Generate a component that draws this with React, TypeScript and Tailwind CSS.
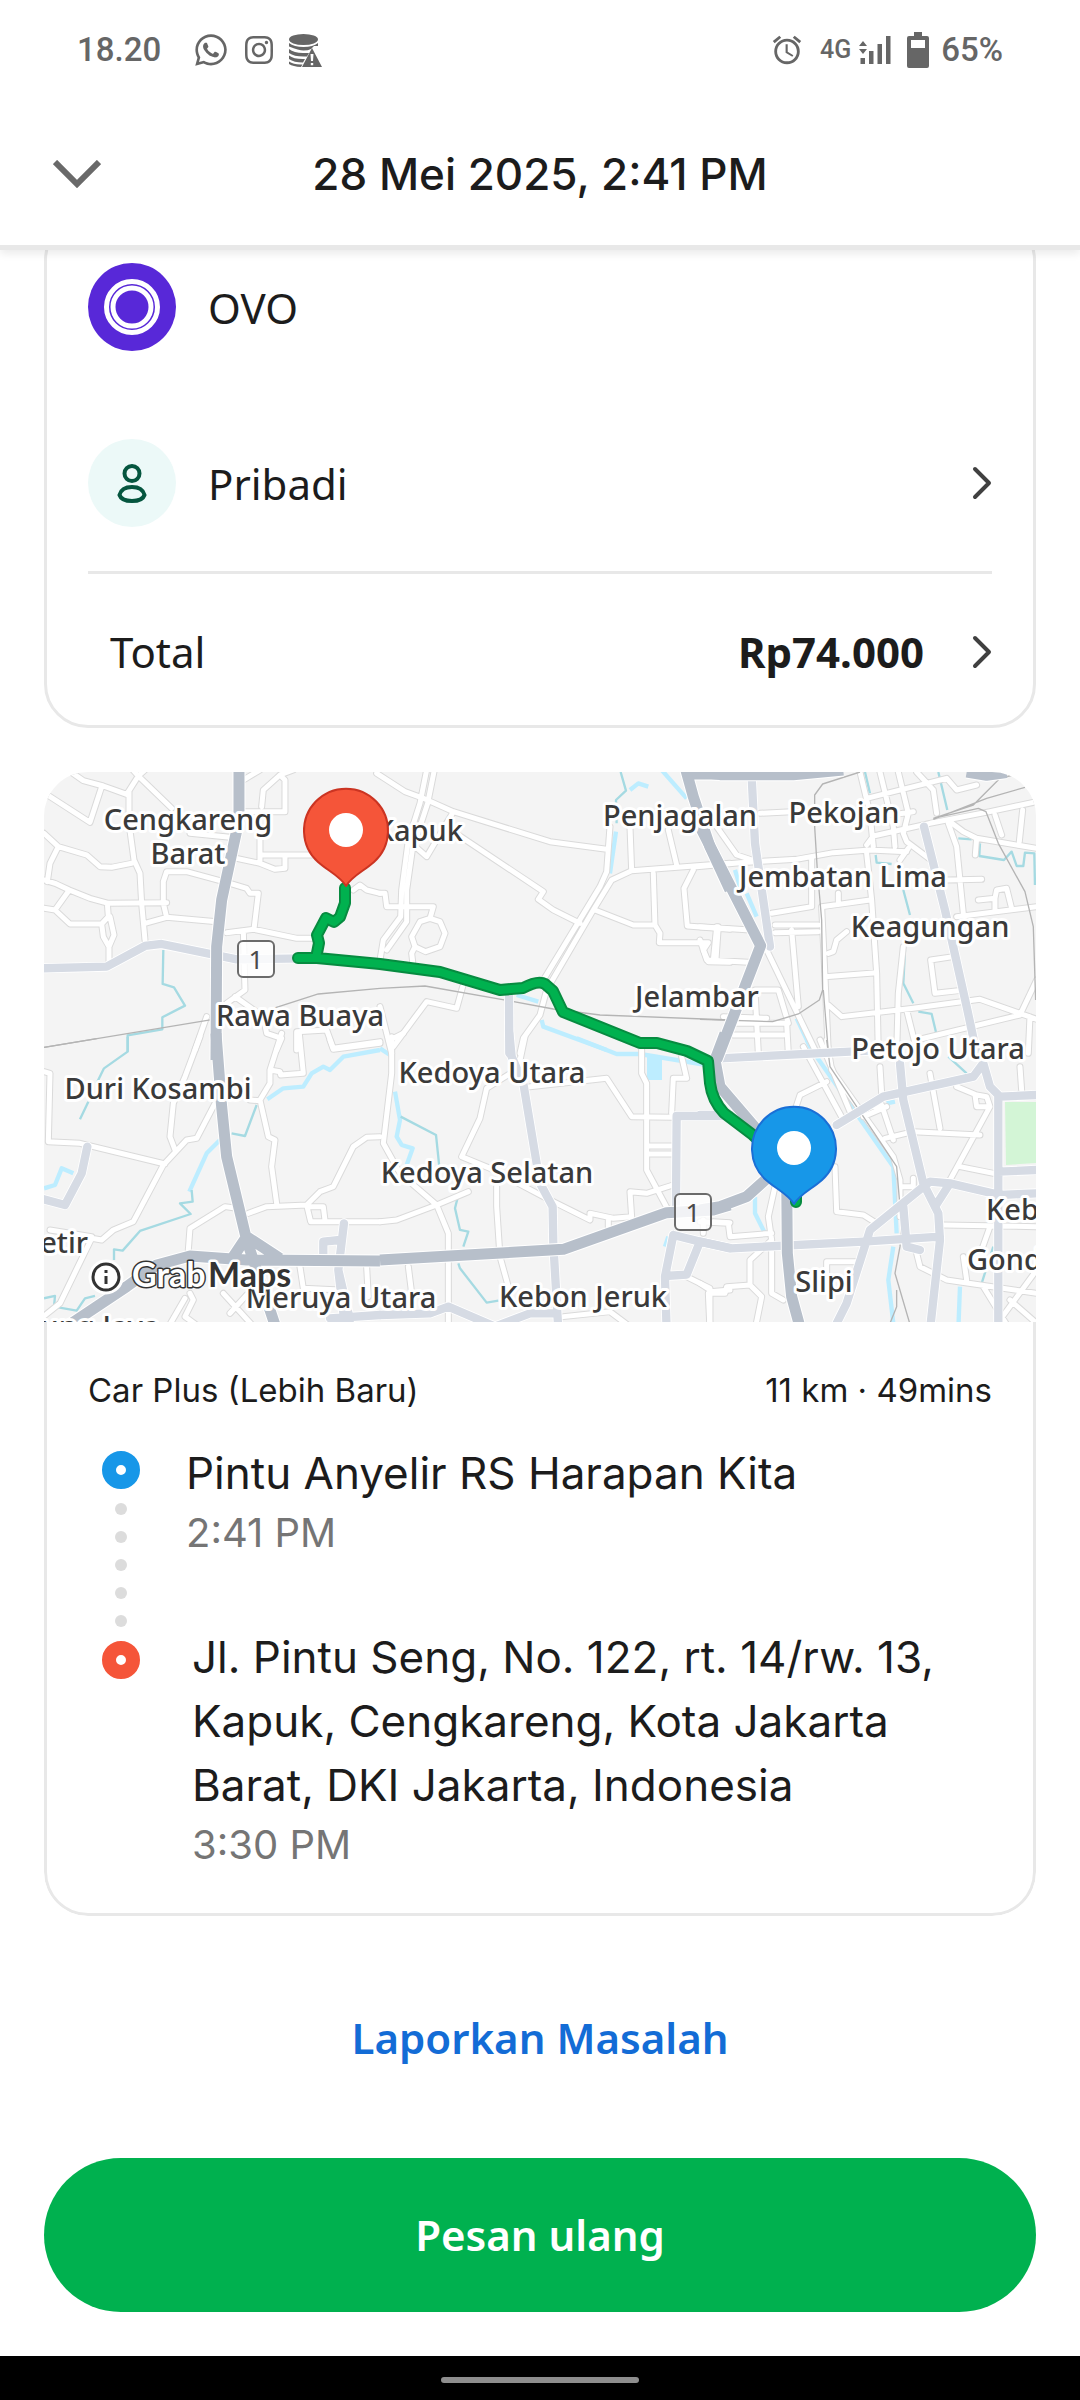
import React from 'react';
import { FaInstagram, FaWhatsapp } from 'react-icons/fa';
import { MdAlarm } from 'react-icons/md';

interface MapSheet {
  origin: string;
  minor: string;
  light: string;
  heavy: string;
  stream: string;
  river: string;
  rail: string;
}

// The map is cut in six sheets, each drawn at three times its final size
const SHEETS: MapSheet[] = [
  {
    origin: 'translate(30 760) scale(0.3333)',
    minor:
      'M100 20L160 62 220 78 290 103 325 48 425 145M325 48L300 20M325 48L345 30M215 80L180 187 45 100M297 95L297 190 312 300 330 340 335 430 345 540M42 220L85 260 170 285 210 320 245 322 305 310M85 260L60 310 52 365M42 360L75 370 118 390 180 415 235 430 410 428M118 390L75 450 42 445M75 450L120 492 215 492 235 470 232 430M215 492L220 530 237 560 237 610M240 470L252 525 237 560M345 490L410 472 560 485M410 472L400 430 400 365 410 335 470 335 600 370 650 385 660 400 685 400 672 508 590 518M672 508L800 535 850 535M640 512L645 690 590 730M530 770L495 870M615 710L700 770 710 820 755 835 740 870M620 155L765 155 765 60 750 45 700 90 695 140M750 45L790 30M640 60L690 30M690 240L690 310 620 295M690 285L850 285M690 310L735 328 765 325 765 290M480 220L600 232M970 390L990 375 1010 390 1050 400M800 870L800 815 890 810 910 865 1050 845',
    light: 'M30 625L230 620 345 558 395 552 620 598 820 595',
    heavy: 'M627 20L627 180 575 420 560 560 558 900',
    stream: 'M400 570L398 672 432 682 465 737 397 772 397 808 293 826 293 875',
    river: '',
    rail: 'M42 862L550 778M730 745L865 702 1050 685',
  },
  {
    origin: 'translate(380 760) scale(0.3333)',
    minor:
      'M-10 40L75 95 130 115 220 155 510 245 680 268M140 30L120 130 85 240 65 390 62 470 10 540 0 600M163 30L143 130 97 270 80 390 80 485 20 570M220 155L140 290 100 255M235 225L490 395 475 418 520 450 600 490M0 400L15 400 20 440 160 440 150 475 180 485 195 520 180 560 137 575 105 560 95 530 120 485 150 475M105 560L95 580 98 605M690 200L680 335 660 380 490 660M1050 310L755 332 695 360 640 450 500 690 480 765 430 835 420 880M750 200L755 330M865 210L890 315M820 340L825 495 760 495 645 450M825 495L840 520 838 548 985 548 970 570 985 605 1050 607M940 330L912 385 922 498 1050 508M1015 500L1008 600M248 680L230 745 140 725 40 860M0 740L35 880',
    light: 'M387 700L388 880',
    heavy: 'M915 20L940 110 990 260 1050 390M930 42L1050 42',
    stream: 'M722 36L738 92 708 120 710 190',
    river: 'M845 30L920 115M708 215L690 340M750 90L775 70 805 80M410 705L475 725M485 780L490 800 680 870',
    rail: 'M0 685L135 678 385 722 520 747 660 765 1050 780',
  },
  {
    origin: 'translate(700 760) scale(0.3333)',
    minor:
      'M180 160L275 155M-10 320L120 308 290 298 400 278 510 270 620 275M500 255L520 228 690 190 870 155 1010 125M480 36L510 160 520 260M540 36L580 200 585 260M595 36L625 160 610 220M500 115L620 85 740 55 770 90 830 75M650 36L700 90 710 160M510 175L640 155M750 185L790 215 830 235 1010 265M745 190L770 260 790 460M885 165L905 225M968 150L958 245M830 235L826 285M50 200L110 285 155 300M500 280L515 420 530 640 535 880M215 460L335 440 335 290M365 440L510 420M415 400L415 430M365 440L375 650 385 880M375 650L530 638M440 515L410 540 400 575 385 580M225 518L355 515M225 495L355 495M275 510L295 740M0 500L150 510M50 500L40 600M0 540L20 600 145 607M610 220L620 245 700 305M625 265L600 300M740 360L845 358M770 470L1010 440M835 420L885 415 890 390 920 385 935 445M885 415L885 450M760 590L692 600 705 700 775 692M385 735L425 770 640 745 840 718 1010 778M610 560L595 700 590 880M620 750L650 870M650 840L960 765 1010 660M200 570L350 880M165 690L235 690 265 790M165 690L175 880M110 790L260 790 265 880M100 825L250 825M70 770L200 775M990 770L985 880',
    light: 'M155 50L165 250 210 560M672 200L735 450 800 740 830 880',
    heavy: 'M-5 190L182 557 50 900M-20 34L60 44 280 44 430 30M800 36L860 46 920 38',
    stream:
      'M495 36L510 100M715 36L742 150M775 235L815 238M840 250L838 288 912 300 935 275 950 318 970 318 975 278 1003 280 1005 375M527 285L530 308 575 312M600 300L630 270M610 390L630 465M615 570L610 670 640 730M655 755L695 762 710 825M375 660L378 720',
    river: 'M140 400L170 470M105 330L120 380M290 775L335 870',
    rail: 'M480 36L368 72 344 105 344 200 352 330 365 480 368 690 358 720 295 762 218 785 0 778M370 690L385 875M700 175L820 135 900 55 940 45M700 178L860 115 975 82M700 175L835 145 858 155 895 250 975 395 1000 500 1007 720',
  },
  {
    origin: 'translate(30 1040) scale(0.3333)',
    minor:
      'M510 -10L465 110 430 190 420 290 435 330M42 95L60 100 55 305 150 310 405 372M555 190L500 295 470 300 400 375 310 545 250 570 215 600 185 595 90 790 40 830M755 -20L720 90 720 130 690 180 715 290 735 300 725 380 740 490M660 180L690 182M720 90L750 95 752 105 820 100 808 -20M900 0L910 28 1050 10M1050 290L1010 292 970 320 910 440 870 455 830 495 710 500 655 520M830 495L842 545 1050 545M840 500L880 500 885 540M475 630L480 565 585 500 620 505M60 570L185 590M480 760L490 780 465 830 520 870M465 775L410 870M580 760L680 870M650 765L600 820M810 680L820 745 930 750M1010 680L1015 770',
    light: 'M172 320L155 400 105 495 30 475M942 550L925 690 960 840M925 690L945 860M880 650L880 605 930 600M900 835L1050 825',
    heavy: 'M558 -20L575 200 590 350 650 600 740 870M110 860L290 740 380 675 480 648 650 660 1050 663M610 650L650 590 750 655',
    stream:
      'M293 -10L293 35 222 85 200 130M175 185L150 238M680 195L645 288 605 280M485 450L488 485 450 490 482 522 330 573 278 632 252 628 252 660M42 775L75 768 72 800 140 812 165 775 195 768',
    river: 'M570 300L530 340 478 455M712 178L760 145 820 140 845 100 880 80 900 90 940 50 1050 30M42 445L75 435 95 385 130 400',
    rail: 'M42 22L200 -4',
  },
  {
    origin: 'translate(380 1040) scale(0.3333)',
    minor:
      'M35 -10L35 100 10 310 60 400 170 495 205 580 205 870M0 545L50 540 170 495 265 455M435 -10L415 85 320 145 300 235 245 350 330 385 490 470 630 540 630 520 700 535 755 530 750 455 800 460 880 435M350 440L350 500 360 650 385 740M450 140L680 115 755 230 880 232M785 30L785 100 800 130 800 390 870 520M905 50L920 115 880 115 875 220M805 318L880 318M805 342L880 342M85 680L95 760M685 540L685 560M550 830L690 815 750 860M920 710L990 745 990 870M990 755L1050 750M1000 545L1050 548M970 540L970 580M30 0L70 -20',
    light:
      'M388 -20L395 50 430 130 480 430 518 500 520 610 535 870M1050 228L890 228 888 510M880 585L855 710 860 870M855 708L920 704 960 605M880 585L960 605 1050 625M0 825L150 820 205 800 345 860 450 820 530 820',
    heavy: 'M0 660L550 628 860 518 1000 510 1050 495',
    stream: 'M62 230L168 285 180 400M235 465L225 505 240 570 265 575 250 620M235 670L240 685 320 788 355 782',
    river: 'M45 155L60 240 50 290 65 315 98 325 80 375M590 -5L710 42 780 42 980 75M0 25L30 45M865 590L855 620M822 50V118',
    rail: '',
  },
  {
    origin: 'translate(700 1040) scale(0.3333)',
    minor:
      'M380 125L300 165 285 210M310 20L430 240M360 0L450 215M380 0L395 90 580 350 600 420 600 530M490 230L560 200M515 200L545 195 580 300M555 295L640 275 840 285M690 100L720 265M870 200L750 420M540 80L545 160M770 140L830 165 860 170 870 200 830 200 825 165M960 80L965 150M780 380L880 400M640 415L640 440 600 440M405 380L410 515 490 525 530 550M225 440L205 530 215 600 150 660 150 735 185 770 165 870M215 600L215 760 250 780M150 735L80 740 75 760 25 760 30 870M0 730L30 750M0 545L85 550 90 590 215 580M380 700L380 665 470 665M730 555L1010 560M870 560L845 630M790 650L800 720M650 640L660 680 740 720 1010 760M850 740L930 870M900 840L1010 690M930 780L1010 850',
    light:
      'M60 55L450 35 540 30M0 225L130 225M410 255L550 170 820 110 850 70 870 140 900 170 1010 165M600 70L610 180 670 430 715 520 720 600 690 870M895 170L895 870M895 395L1010 390M410 850L440 790 510 570 670 440 690 425 750 430 900 465 1010 460M750 430L705 500M0 605L95 625 490 605 720 590M610 500L620 620 660 630',
    heavy: 'M75 -20L45 60 60 140 180 280M0 510L60 500 140 470 240 380M260 400L262 640 275 770 305 880',
    stream: 'M745 50L800 100M880 620L845 730',
    river: 'M320 0L350 50 580 380 590 580M580 620L565 720 580 850M165 470L165 520 195 580M560 190L585 185M780 740L775 870',
    rail: 'M380 0L390 80 590 380 605 560 600 620 585 700 635 870M590 750L590 800 570 850',
  },
];

const LABELS: { text: string; x: number; y: number; anchor?: 'start' | 'end' }[] = [
  { text: 'Cengkareng', x: 188, y: 830 },
  { text: 'Barat', x: 188, y: 864 },
  { text: 'Kapuk', x: 463, y: 841, anchor: 'end' },
  { text: 'Penjagalan', x: 680, y: 826 },
  { text: 'Pekojan', x: 844, y: 823 },
  { text: 'Jembatan Lima', x: 843, y: 887 },
  { text: 'Keagungan', x: 930, y: 937 },
  { text: 'Rawa Buaya', x: 300, y: 1026 },
  { text: 'Jelambar', x: 697, y: 1007 },
  { text: 'Petojo Utara', x: 938, y: 1059 },
  { text: 'Duri Kosambi', x: 158, y: 1099 },
  { text: 'Kedoya Utara', x: 492, y: 1083 },
  { text: 'Kedoya Selatan', x: 487, y: 1183 },
  { text: 'Kebon Jeruk', x: 583, y: 1307 },
  { text: 'Meruya Utara', x: 341, y: 1308 },
  { text: 'Slipi', x: 824, y: 1292 },
  { text: 'Keb', x: 986, y: 1220, anchor: 'start' },
  { text: 'Gond', x: 967, y: 1270, anchor: 'start' },
  { text: 'etir', x: 88, y: 1253, anchor: 'end' },
  { text: 'ung Jaya', x: 100, y: 1337 },
];

const ROUTE =
  'M345 888L345 903 340 917 334 922 326 918 317 935 319 943 316 958M298 958L317 958 380 964 440 972 500 990 523 988Q538 980 545 984L553 991 563 1012 640 1043 657 1043 687 1051 708 1061 710 1083Q712 1100 724 1113L753 1135 796 1175 796 1202';

const PIN = 'M0 56C-6 46-18 41-28 32A42 42 0 1 1 28 32C18 41 6 46 0 56Z';

const Shield = ({ x, y }: { x: number; y: number }) => (
  <g>
    <rect x={x} y={y} width="36" height="36" rx="5" fill="#fff" fillOpacity="0.8" stroke="#6b6b6b" strokeWidth="2" />
    <text x={x + 18} y={y + 28} textAnchor="middle" fontSize="26" fill="#4a4a4a">1</text>
  </g>
);

const RouteMap = () => (
  <svg
    viewBox="44 772 992 550"
    className="block w-full bg-[#f4f4f4] font-['Noto_Sans',sans-serif]"
    fill="none"
    strokeLinejoin="round"
    role="img"
    aria-label="Peta rute perjalanan"
  >
    <path d="M1005 1102H1036V1163L1006 1165Z" fill="#d3f5d6" />
    {SHEETS.map((s) => (
      <g key={s.origin} transform={s.origin}>
        <path d={s.river} stroke="#bdedff" strokeWidth="13" />
        <path d={s.stream} stroke="#a5dae2" strokeWidth="7" />
      </g>
    ))}
    <rect x="647" y="1056" width="15" height="24" fill="#bdedff" />
    {SHEETS.map((s) => (
      <path key={s.origin} transform={s.origin} d={s.minor} stroke="#dadada" strokeWidth="21" strokeLinecap="round" />
    ))}
    {SHEETS.map((s) => (
      <path key={s.origin} transform={s.origin} d={s.minor} stroke="#fff" strokeWidth="15" strokeLinecap="round" />
    ))}
    {SHEETS.map((s) => (
      <path key={s.origin} transform={s.origin} d={s.rail} stroke="#b4b4b4" strokeWidth="4" />
    ))}
    {SHEETS.map((s) => (
      <path key={s.origin} transform={s.origin} d={s.light} stroke="#fff" strokeWidth="30" strokeLinecap="round" />
    ))}
    {SHEETS.map((s) => (
      <path key={s.origin} transform={s.origin} d={s.light} stroke="#d6dbe4" strokeWidth="25" strokeLinecap="round" />
    ))}
    {SHEETS.map((s) => (
      <path key={s.origin} transform={s.origin} d={s.heavy} stroke="#fff" strokeWidth="39" />
    ))}
    {SHEETS.map((s) => (
      <path key={s.origin} transform={s.origin} d={s.heavy} stroke="#b7bfca" strokeWidth="33" />
    ))}

    <Shield x={238} y={941} />
    <Shield x={675} y={1194} />

    <g fontSize="29" fontWeight="500" fill="#3a3a3a" stroke="#fff" strokeWidth="6" paintOrder="stroke">
      {LABELS.map((l) => (
        <text key={l.text} x={l.x} y={l.y} textAnchor={l.anchor ?? 'middle'}>{l.text}</text>
      ))}
    </g>

    {/* Map attribution */}
    <circle cx="106" cy="1277" r="14" fill="#fff" stroke="#fff" strokeWidth="7" />
    <circle cx="106" cy="1277" r="13" stroke="#333" strokeWidth="3" />
    <path d="M106 1276V1284M106 1270V1273" stroke="#333" strokeWidth="3" />
    <g className="font-[Lato,sans-serif]" fontSize="34" fontWeight="700" paintOrder="stroke">
      <text x="132" y="1287" fill="#fff" stroke="#333" strokeWidth="3">Grab</text>
      <text x="208" y="1287" fill="#333" stroke="#fff" strokeWidth="5">Maps</text>
    </g>

    <path d={ROUTE} stroke="#078b40" strokeWidth="12" strokeLinecap="round" />
    <path d={ROUTE} stroke="#00b14f" strokeWidth="8" strokeLinecap="round" />
    <g transform="translate(346 830)">
      <path d={PIN} fill="#f55539" stroke="#cb3422" strokeWidth="2" />
      <circle r="17" fill="#fff" />
    </g>
    <g transform="translate(794 1148)">
      <path d={PIN} fill="#1797e8" stroke="#1a6fd6" strokeWidth="2" />
      <circle r="17" fill="#fff" />
    </g>
  </svg>
);

const DatabaseAlertIcon = () => (
  <svg viewBox="0 0 33 33" className="h-[33px] w-[33px]" fill="#666">
    <ellipse cx="14.5" cy="5.5" rx="14.5" ry="5.5" />
    <path d="M0 9Q5 13 14.500 13T29 9V12L25 12 22 15Q19 16.500 14.500 16.500T0 12.500Z" />
    <path d="M0 15Q5 19 14 19H20L18 22.500H14.500Q5 22.500 0 19Z" />
    <path d="M0 21.500Q5 25.500 16 25L14 28.500Q5 28.500 0 25Z" />
    <path d="M0 27.500Q5 31 13.500 30.500L12 33Q4 32.500 0 30Z" />
    <path fillRule="evenodd" d="M23 14L33 33H13ZM21.500 20L22 27H24L24.500 20ZM21.800 29V31.300H24.200V29Z" />
  </svg>
);

const SignalIcon = () => (
  <svg viewBox="0 0 32 28" className="h-7 w-8" fill="#666">
    <path d="M0 10L4 5L8 10ZM0 13H8L4 18Z" />
    <path d="M1.500 22H6V28H1.500ZM10 15H14.500V28H10ZM18.500 8H23V28H18.500ZM27 0H31.500V28H27Z" />
  </svg>
);

const BatteryIcon = () => (
  <svg viewBox="0 0 22 36" className="h-9 w-[22px]" fill="#666">
    <path fillRule="evenodd" d="M7 0H15V4H20Q22 4 22 6V34Q22 36 20 36H2Q0 36 0 34V6Q0 4 2 4H7ZM4 8V16H18V8Z" />
  </svg>
);

const ChevronRight = () => (
  <svg viewBox="0 0 20 34" className="h-[34px] w-5" fill="none" stroke="#404040" strokeWidth="4" strokeLinecap="round" strokeLinejoin="round">
    <path d="M3 3L17 17L3 31" />
  </svg>
);

const OvoIcon = () => (
  <svg viewBox="0 0 88 88" className="h-22 w-22" fill="none">
    <circle cx="44" cy="44" r="44" fill="#5828d8" />
    <g stroke="#fff" strokeWidth="5">
      <circle cx="44" cy="44" r="25.500" />
      <circle cx="44" cy="44" r="19" />
    </g>
  </svg>
);

const PersonIcon = () => (
  <svg viewBox="0 0 88 88" className="h-22 w-22" fill="none">
    <circle cx="44" cy="44" r="44" fill="#ecf9f8" />
    <g stroke="#05563f" strokeWidth="4">
      <circle cx="44" cy="34.500" r="7.500" />
      <path d="M31.500 56C33 50 38 48 44 48S55 50 56.500 56C55 60.500 50 62 44 62S33 60.500 31.500 56Z" />
    </g>
  </svg>
);

const App: React.FC = () => {
  return (
    <div className="flex min-h-screen flex-col bg-white font-[Inter,sans-serif] text-[#1c1c1c]">
      <header className="relative z-10 border-b-[5px] border-[#e8e8e8] bg-white shadow-[0_4px_8px_rgba(0,0,0,0.08)]">
        {/* Status bar */}
        <div className="flex h-25 items-center justify-between px-[77px] font-[Roboto,sans-serif] text-[33px] font-medium text-[#666]">
          <div className="flex items-center">
            <span>18.20</span>
            <FaWhatsapp className="ml-8 h-9 w-9" />
            <FaInstagram className="ml-[14px] h-8 w-8" />
            <span className="ml-[14px]"><DatabaseAlertIcon /></span>
          </div>
          <div className="flex items-center">
            <MdAlarm className="mr-4 h-[34px] w-[34px]" />
            <span className="mr-2 text-[25px]">4G</span>
            <SignalIcon />
            <span className="mr-3 ml-4"><BatteryIcon /></span>
            <span>65%</span>
          </div>
        </div>

        {/* Title bar */}
        <div className="grid grid-cols-[1fr_auto_1fr] items-center px-[53px] pt-[42px] pb-[39px]">
          <button type="button" aria-label="Tutup" className="justify-self-start">
            <svg viewBox="0 0 48 28" className="h-7 w-12" fill="none" stroke="#696969" strokeWidth="6">
              <path d="M2 2L24 24L46 2" />
            </svg>
          </button>
          <h1 className="text-[44px] leading-[64px] font-medium">28 Mei 2025, 2:41 PM</h1>
        </div>
      </header>

      <main className="flex flex-1 flex-col px-11">
        {/* Payment */}
        <section className="-mt-[34px] rounded-[44px] border-3 border-[#e8e8e8] px-[41px] font-['Noto_Sans',sans-serif] text-[42px]">
          <div className="flex items-center gap-8 py-11">
            <OvoIcon />
            <span>OVO</span>
          </div>
          <button type="button" className="flex w-full items-center gap-8 py-11 text-left">
            <PersonIcon />
            <span className="flex-1">Pribadi</span>
            <ChevronRight />
          </button>
          <button type="button" className="flex w-full items-center border-t-3 border-[#e8e8e8] pt-[46px] pb-[42px] pl-[22px] text-left">
            <span className="flex-1">Total</span>
            <span className="mr-12 font-bold">Rp74.000</span>
            <ChevronRight />
          </button>
        </section>

        {/* Trip */}
        <section className="mt-11 overflow-hidden rounded-[44px]">
          <RouteMap />
          <div className="rounded-b-[44px] border-3 border-t-0 border-[#e8e8e8] px-[41px] pt-11 pb-10">
            <div className="flex items-center justify-between text-[33px] leading-12">
              <span>Car Plus (Lebih Baru)</span>
              <span>11 km · 49mins</span>
            </div>
            <div className="mt-[27px] flex gap-[46px] pl-[14px]">
              <div className="flex flex-col items-center pt-[10px]">
                <span className="h-[38px] w-[38px] rounded-full border-14 border-[#1797e8] bg-white"></span>
                <div className="flex flex-col gap-4 py-[14px]">
                  <span className="h-3 w-3 rounded-full bg-[#dcdcdc]"></span>
                  <span className="h-3 w-3 rounded-full bg-[#dcdcdc]"></span>
                  <span className="h-3 w-3 rounded-full bg-[#dcdcdc]"></span>
                  <span className="h-3 w-3 rounded-full bg-[#dcdcdc]"></span>
                  <span className="h-3 w-3 rounded-full bg-[#dcdcdc]"></span>
                </div>
                <span className="h-[38px] w-[38px] rounded-full border-14 border-[#f55539] bg-white"></span>
              </div>
              <div className="flex-1">
                <p className="text-[44px] leading-16">Pintu Anyelir RS Harapan Kita</p>
                <p className="text-[40px] leading-14 text-[#757575]">2:41 PM</p>
                <p className="mt-16 pl-1.5 text-[44px] leading-16">
                  Jl. Pintu Seng, No. 122, rt. 14/rw. 13, Kapuk, Cengkareng, Kota Jakarta Barat, DKI Jakarta, Indonesia
                </p>
                <p className="pl-1.5 text-[40px] leading-14 text-[#757575]">3:30 PM</p>
              </div>
            </div>
          </div>
        </section>

        {/* Actions */}
        <div className="flex flex-1 flex-col items-center justify-end gap-22 pb-11 font-['Noto_Sans',sans-serif] text-[42px] font-semibold">
          <a href="#laporkan" className="leading-16 text-[#136cd6]">Laporkan Masalah</a>
          <button type="button" className="w-full rounded-full bg-[#00b14f] py-11 leading-[66px] text-white">Pesan ulang</button>
        </div>
      </main>

      <footer className="flex items-center justify-center bg-black pt-[21px] pb-[17px]">
        <div className="h-1.5 w-[198px] rounded-full bg-[#8e8e8e]"></div>
      </footer>
    </div>
  );
};

export default App;
